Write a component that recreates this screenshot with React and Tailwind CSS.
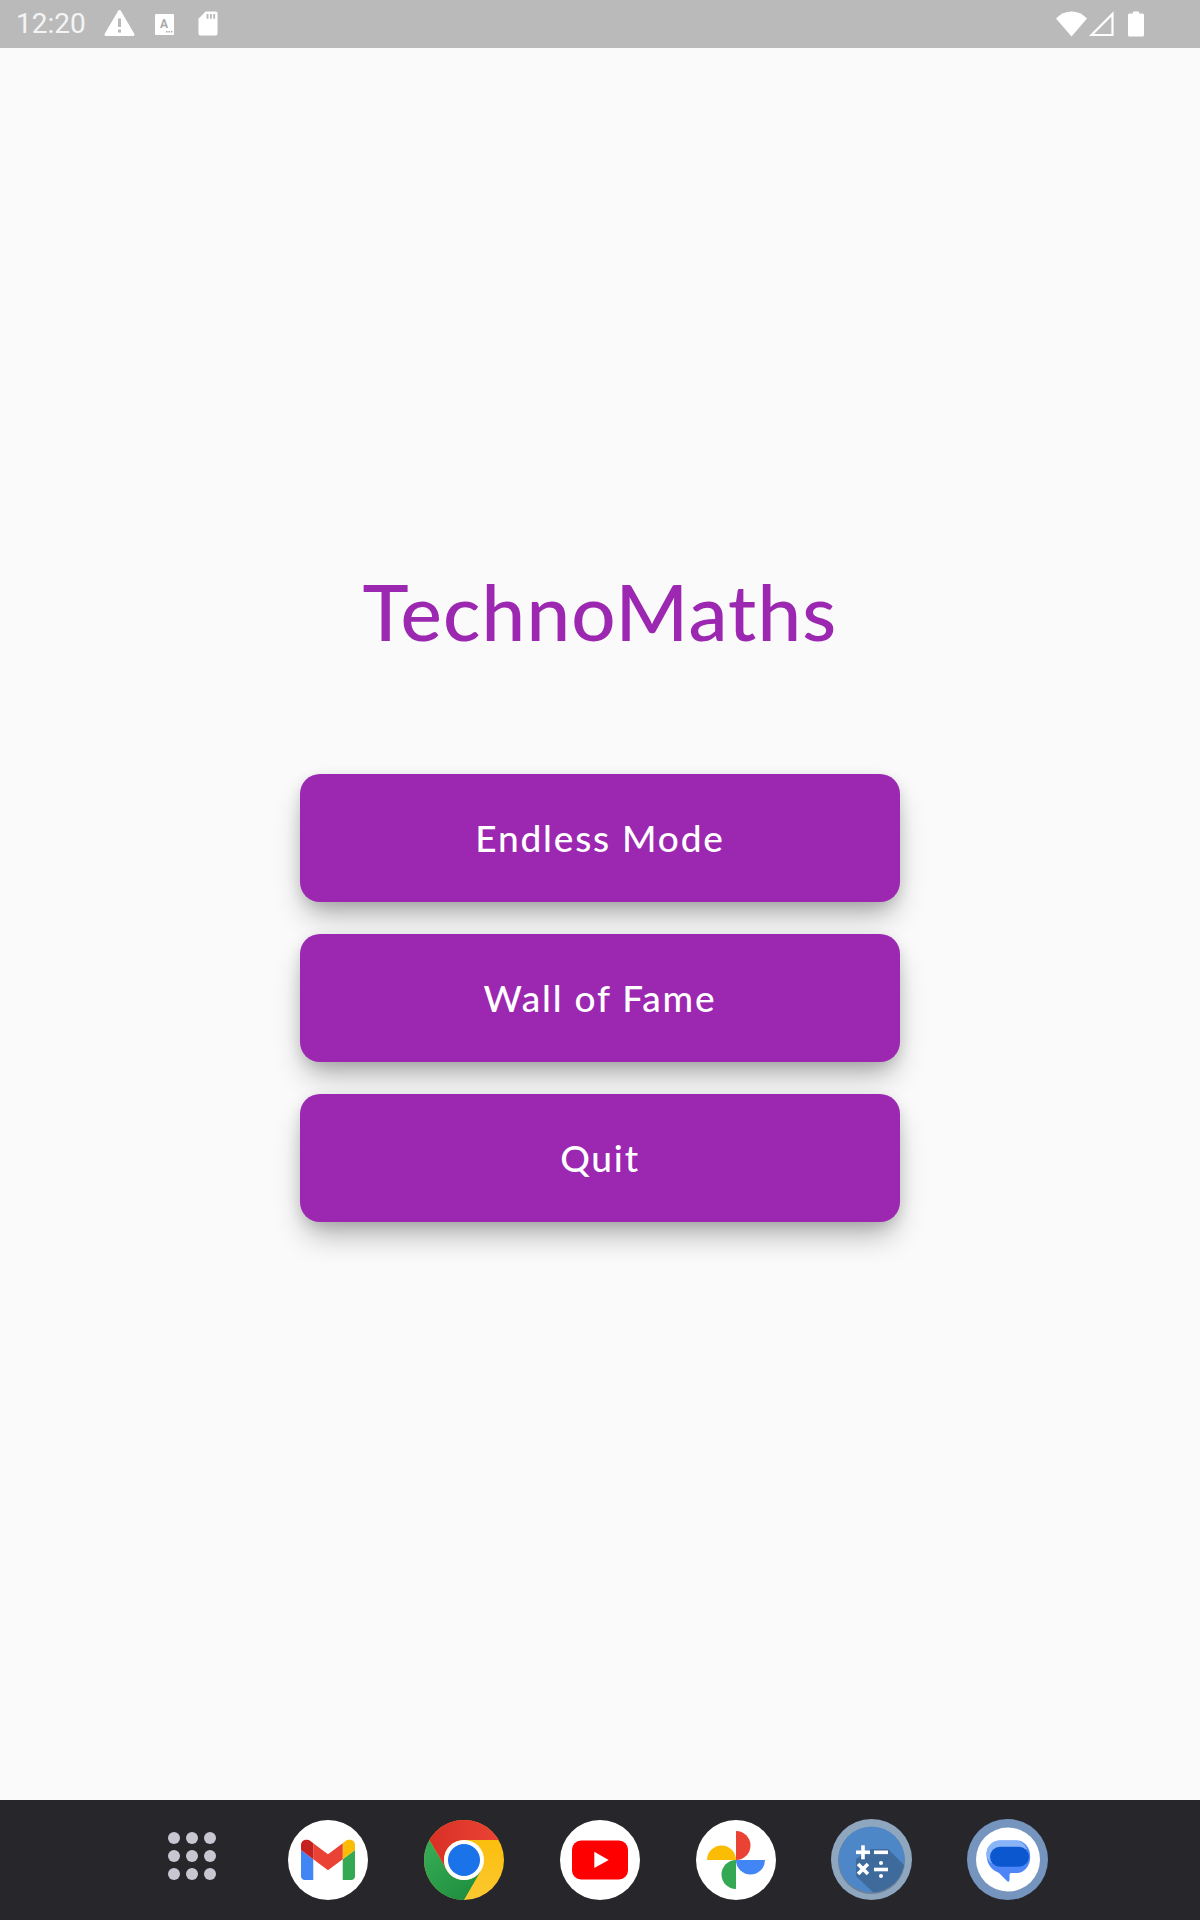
const StatusBar = () => (
  <div className="flex items-center h-12 bg-[#bababa]">
    <span className="ml-[16px] w-[72px] text-[28px] leading-none text-[#f4f4f4] font-['Roboto',sans-serif]">12:20</span>
    {/* warning */}
    <svg className="ml-[16px] mb-[3px]" width="31" height="28" viewBox="0 0 31 28">
      <path fill="#fff" stroke="#fff" strokeWidth="3" strokeLinejoin="round" d="M15.5 2.5 L29 25.5 H2 Z" />
      <rect x="14" y="9.5" width="3" height="8.5" fill="#bababa" />
      <rect x="14" y="20.5" width="3" height="3" fill="#bababa" />
    </svg>
    {/* keyboard app box */}
    <svg className="ml-[20px]" width="19" height="21" viewBox="0 0 19 21">
      <rect width="19" height="21" rx="1" fill="#fff" />
      <text x="9" y="14" fontSize="12" fontWeight="700" textAnchor="middle" fill="#aaa" fontFamily="Roboto, sans-serif">A</text>
      <rect x="11" y="17" width="1.5" height="1.5" fill="#aaa" />
      <rect x="13.5" y="17" width="1.5" height="1.5" fill="#aaa" />
      <rect x="16" y="17" width="1.5" height="1.5" fill="#aaa" />
    </svg>
    {/* sd card */}
    <svg className="ml-[24px] mb-px" width="20" height="25" viewBox="0 0 21 26">
      <path fill="#fff" fillRule="evenodd" d="M8 0.5 H18.5 Q20.5 .5 20.5 2.5 V23.5 Q20.5 25.5 18.5 25.5 H2.5 Q.5 25.5 .5 23.5 V8 Z M9 3 V8 H11 V3 Z M12.5 3 V8 H14.5 V3 Z M16 3 V8 H18 V3 Z" />
    </svg>
    <div className="flex-1" />
    {/* wifi */}
    <svg width="31" height="26" viewBox="0 0 31 26">
      <path fill="#fff" d="M15.5 25.5 L0 7.5 Q6.5 .5 15.5 .5 Q24.5 .5 31 7.5 Z" />
    </svg>
    {/* signal, no service */}
    <svg className="ml-[2px]" width="26" height="26" viewBox="0 0 26 26">
      <path fill="none" stroke="#fff" strokeWidth="2.2" d="M23.5 3 V24 H2.5 Z" />
    </svg>
    {/* battery */}
    <svg className="ml-[13px] mr-[56px]" width="16" height="26" viewBox="0 0 16 26">
      <path fill="#fff" d="M5 .5 H11 V2.5 H14.5 Q16 2.5 16 4 V24 Q16 25.5 14.5 25.5 H1.5 Q0 25.5 0 24 V4 Q0 2.5 1.5 2.5 H5 Z" />
    </svg>
  </div>
);

const MenuButton = ({ label }) => (
  <button className="flex items-center justify-center w-[600px] h-[128px] rounded-[20px] bg-[#9c27b0] text-white text-[37px] font-medium tracking-[1.8px] shadow-[0_18px_30px_-6px_rgba(0,0,0,0.3),0_4px_14px_rgba(0,0,0,0.12)] font-['Lato',sans-serif]">
    {label}
  </button>
);

const AppsGrid = () => (
  <div className="grid grid-cols-3 gap-[6px] w-[48px] mb-2">
    {[0, 1, 2, 3, 4, 5, 6, 7, 8].map((i) => (
      <div key={i} className="w-3 h-3 rounded-full bg-[#c8c6d0]" />
    ))}
  </div>
);

const Gmail = () => (
  <svg width="80" height="80" viewBox="0 0 80 80">
    <circle cx="40" cy="40" r="40" fill="#fff" />
    <svg x="13" y="19.5" width="54" height="40.5" viewBox="52 42 88 66">
      <path fill="#4285f4" d="M58 108h14V74L52 59v43c0 3.32 2.69 6 6 6" />
      <path fill="#34a853" d="M120 108h14c3.32 0 6-2.69 6-6V59l-20 15" />
      <path fill="#fbbc04" d="M120 48v26l20-15v-8c0-7.42-8.47-11.65-14.4-7.2" />
      <path fill="#ea4335" d="M72 74V48l24 18 24-18v26L96 92" />
      <path fill="#c5221f" d="M52 51v8l20 15V48l-5.6-4.2c-5.94-4.45-14.4-.22-14.4 7.2" />
    </svg>
  </svg>
);

const Chrome = () => (
  <svg width="80" height="80" viewBox="0 0 80 80">
    <defs>
      <linearGradient id="cr" x1="0" y1="0" x2="1" y2="0">
        <stop offset="0" stopColor="#d93025" />
        <stop offset="1" stopColor="#ea4335" />
      </linearGradient>
      <linearGradient id="cg" x1="0.8" y1="1" x2="0.1" y2="0.2">
        <stop offset="0" stopColor="#1e8e3e" />
        <stop offset="1" stopColor="#34a853" />
      </linearGradient>
      <linearGradient id="cy" x1="0.6" y1="0" x2="0.4" y2="1">
        <stop offset="0" stopColor="#fbbc04" />
        <stop offset="1" stopColor="#fcc934" />
      </linearGradient>
    </defs>
    <circle cx="40" cy="40" r="40" fill="url(#cy)" />
    <path fill="url(#cr)" d="M5.36 20 A40 40 0 0 1 74.64 20 H40 A20 20 0 0 0 22.68 50 Z" />
    <path fill="url(#cg)" d="M5.36 20 L22.68 50 A20 20 0 0 0 57.32 50 L40 80 A40 40 0 0 1 5.36 20 Z" />
    <circle cx="40" cy="40" r="20" fill="#fff" />
    <circle cx="40" cy="40" r="16" fill="#1a73e8" />
  </svg>
);

const YouTube = () => (
  <svg width="80" height="80" viewBox="0 0 80 80">
    <circle cx="40" cy="40" r="40" fill="#fff" />
    <rect x="12" y="20.5" width="56" height="39" rx="9" fill="#ff0000" />
    <path fill="#fff" d="M34.3 31.7 L48.7 40 L34.3 48 Z" />
  </svg>
);

const Photos = () => (
  <svg width="80" height="80" viewBox="0 0 80 80">
    <circle cx="40" cy="40" r="40" fill="#fff" />
    <path fill="#ea4335" d="M40 11 A14.5 14.5 0 0 1 40 40 Z" />
    <path fill="#4285f4" d="M69 40 A14.5 14.5 0 0 1 40 40 Z" />
    <path fill="#34a853" d="M40 69 A14.5 14.5 0 0 1 40 40 Z" />
    <path fill="#fbbc04" d="M11 40 A14.5 14.5 0 0 1 40 40 Z" />
  </svg>
);

const Calculator = () => (
  <svg className="-ml-px -mt-px" width="81" height="81" viewBox="0 0 81 81">
    <defs>
      <clipPath id="calcClip">
        <circle cx="40.5" cy="40.5" r="33" />
      </clipPath>
    </defs>
    <circle cx="40.5" cy="40.5" r="40.5" fill="#8fa6bf" />
    <circle cx="40.5" cy="41.5" r="33.5" fill="#6f8094" />
    <circle cx="40.5" cy="40.5" r="33" fill="#4d87c7" />
    <path clipPath="url(#calcClip)" fill="#3f6a9c" d="M40 30 H57 L95 68 L70 100 L25 57 V40 Z" />
    <g fill="#fff">
      <rect x="25" y="31.5" width="14" height="3.6" />
      <rect x="30.2" y="26.3" width="3.6" height="14" />
      <rect x="43" y="31.5" width="14" height="3.6" />
      <rect x="43" y="48.7" width="14" height="3.6" />
      <circle cx="50" cy="44" r="2" />
      <circle cx="50" cy="57" r="2" />
      <rect x="25" y="48.2" width="14" height="3.6" transform="rotate(45 32 50)" />
      <rect x="30.2" y="43" width="3.6" height="14" transform="rotate(45 32 50)" />
    </g>
  </svg>
);

const Messages = () => (
  <svg className="-ml-px -mt-px" width="81" height="81" viewBox="0 0 81 81">
    <circle cx="40.5" cy="40.5" r="40.5" fill="#7595bf" />
    <circle cx="41" cy="40.5" r="32" fill="#fff" />
    <path fill="#4f86f7" d="M33 21.5 H50 A13 16 0 0 1 50 54 H44 Q42.5 54 42.5 56 V61 Q42 64 40 62 L32 54 Q19.5 49 19.5 35 A13.5 13.5 0 0 1 33 21.5 Z" />
    <path fill="#8ab4f8" d="M33 21.5 H48 Q56 21.5 60 30 L24 44 Q19.5 40 19.5 35 A13.5 13.5 0 0 1 33 21.5 Z" />
    <rect x="23" y="27.7" width="39" height="20" rx="10" fill="#0b57d0" />
  </svg>
);

const DockItem = ({ children }) => (
  <div className="flex items-center justify-center w-[136px]">{children}</div>
);

const App = () => {
  return (
    <div className="flex flex-col w-[1200px] h-[1920px] bg-[#fafafa] overflow-hidden">
      <StatusBar />
      <main className="flex flex-col flex-1 items-center">
        <h1 className="mt-[515px] text-[#9c27b0] text-[78px] font-medium leading-[96px] tracking-[1.2px] font-['Lato',sans-serif]">
          TechnoMaths
        </h1>
        <div className="flex flex-col gap-8 mt-[115px]">
          <MenuButton label="Endless Mode" />
          <MenuButton label="Wall of Fame" />
          <MenuButton label="Quit" />
        </div>
      </main>
      <nav className="flex items-center justify-center h-[120px] bg-[#26262b]">
        <DockItem>
          <AppsGrid />
        </DockItem>
        <DockItem>
          <Gmail />
        </DockItem>
        <DockItem>
          <Chrome />
        </DockItem>
        <DockItem>
          <YouTube />
        </DockItem>
        <DockItem>
          <Photos />
        </DockItem>
        <DockItem>
          <Calculator />
        </DockItem>
        <DockItem>
          <Messages />
        </DockItem>
      </nav>
    </div>
  );
};

export default App;
